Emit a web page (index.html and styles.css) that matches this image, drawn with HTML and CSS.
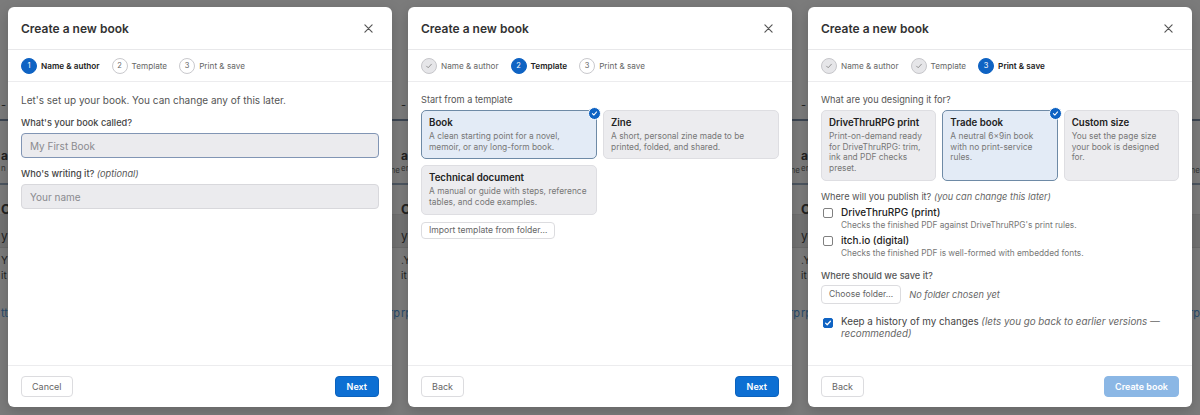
FILE: index.html
```html
<!DOCTYPE html>
<html lang="en">

<head>
	<meta charset="UTF-8">
	<title>Create a new book</title>
	<link rel="stylesheet" href="styles.css">
</head>

<body>
	<div class="shots">

		<!-- Step 1 -->
		<div class="shot">
			<div class="page">
				<div class="page-tabs"><span class="frag-l">-</span></div>
				<div class="page-item"><span class="frag-l strong">a</span><span class="frag-l small">n a</span><span class="frag-r small">ne</span></div>
				<div class="page-row"><span class="frag-l strong">Ol</span></div>
				<div class="page-field"><span class="frag-l">yi</span></div>
				<div class="page-note"><span class="frag-l">Y</span><span class="frag-l">it</span></div>
				<div class="page-link"><span class="frag-l link">tte</span><span class="frag-r link">rp</span></div>
			</div>

			<div class="modal">
				<div class="modal-header">
					<h2>Create a new book</h2>
					<button class="close" aria-label="Close">
						<svg width="9" height="9" viewBox="0 0 10 10"><path d="M1 1l8 8M9 1l-8 8" stroke="#555" stroke-width="1.3" stroke-linecap="round"/></svg>
					</button>
				</div>
				<div class="steps">
					<div class="step active"><span class="dot">1</span>Name &amp; author</div>
					<div class="step"><span class="dot">2</span>Template</div>
					<div class="step"><span class="dot">3</span>Print &amp; save</div>
				</div>
				<div class="modal-body">
					<p class="intro">Let's set up your book. You can change any of this later.</p>
					<label class="field-label">What's your book called?</label>
					<div class="input focused">My First Book</div>
					<label class="field-label">Who's writing it? <em>(optional)</em></label>
					<div class="input">Your name</div>
				</div>
				<div class="modal-footer">
					<button class="btn">Cancel</button>
					<button class="btn primary">Next</button>
				</div>
			</div>
		</div>

		<!-- Step 2 -->
		<div class="shot">
			<div class="page">
				<div class="page-tabs"><span class="frag-l">-</span></div>
				<div class="page-item"><span class="frag-l strong">a</span><span class="frag-l small">en a</span><span class="frag-r small">ne</span></div>
				<div class="page-row"><span class="frag-l strong">Ol</span></div>
				<div class="page-field"><span class="frag-l">yc</span></div>
				<div class="page-note"><span class="frag-l">.Y</span><span class="frag-l">it</span></div>
				<div class="page-link"><span class="frag-l link">rptte</span><span class="frag-r link">rp</span></div>
			</div>

			<div class="modal">
				<div class="modal-header">
					<h2>Create a new book</h2>
					<button class="close" aria-label="Close">
						<svg width="9" height="9" viewBox="0 0 10 10"><path d="M1 1l8 8M9 1l-8 8" stroke="#555" stroke-width="1.3" stroke-linecap="round"/></svg>
					</button>
				</div>
				<div class="steps">
					<div class="step done"><span class="dot"><svg width="8" height="8" viewBox="0 0 10 10"><path d="M2 5.2l2 2 4-4.4" fill="none" stroke="#888" stroke-width="1.1" stroke-linecap="round" stroke-linejoin="round"/></svg></span>Name &amp; author</div>
					<div class="step active"><span class="dot">2</span>Template</div>
					<div class="step"><span class="dot">3</span>Print &amp; save</div>
				</div>
				<div class="modal-body">
					<p class="section-label">Start from a template</p>
					<div class="cards two">
						<div class="card selected">
							<span class="tick"><svg width="7" height="7" viewBox="0 0 10 10"><path d="M2 5.2l2 2 4-4.4" fill="none" stroke="#fff" stroke-width="1.5" stroke-linecap="round" stroke-linejoin="round"/></svg></span>
							<div class="card-title">Book</div>
							<div class="card-desc">A clean starting point for a novel, memoir, or any long-form book.</div>
						</div>
						<div class="card">
							<div class="card-title">Zine</div>
							<div class="card-desc">A short, personal zine made to be printed, folded, and shared.</div>
						</div>
						<div class="card">
							<div class="card-title">Technical document</div>
							<div class="card-desc">A manual or guide with steps, reference tables, and code examples.</div>
						</div>
					</div>
					<button class="btn small import">Import template from folder…</button>
				</div>
				<div class="modal-footer">
					<button class="btn">Back</button>
					<button class="btn primary">Next</button>
				</div>
			</div>
		</div>

		<!-- Step 3 -->
		<div class="shot">
			<div class="page">
				<div class="page-tabs"><span class="frag-l">-</span></div>
				<div class="page-item"><span class="frag-l strong">a</span><span class="frag-l small">en a</span><span class="frag-r small">ne</span></div>
				<div class="page-row"><span class="frag-l strong">Ol</span></div>
				<div class="page-field"><span class="frag-l">yc</span></div>
				<div class="page-note"><span class="frag-l">.Y</span><span class="frag-l">it</span></div>
				<div class="page-link"><span class="frag-l link">rptte</span><span class="frag-r link">rp</span></div>
			</div>

			<div class="modal">
				<div class="modal-header">
					<h2>Create a new book</h2>
					<button class="close" aria-label="Close">
						<svg width="9" height="9" viewBox="0 0 10 10"><path d="M1 1l8 8M9 1l-8 8" stroke="#555" stroke-width="1.3" stroke-linecap="round"/></svg>
					</button>
				</div>
				<div class="steps">
					<div class="step done"><span class="dot"><svg width="8" height="8" viewBox="0 0 10 10"><path d="M2 5.2l2 2 4-4.4" fill="none" stroke="#888" stroke-width="1.1" stroke-linecap="round" stroke-linejoin="round"/></svg></span>Name &amp; author</div>
					<div class="step done"><span class="dot"><svg width="8" height="8" viewBox="0 0 10 10"><path d="M2 5.2l2 2 4-4.4" fill="none" stroke="#888" stroke-width="1.1" stroke-linecap="round" stroke-linejoin="round"/></svg></span>Template</div>
					<div class="step active"><span class="dot">3</span>Print &amp; save</div>
				</div>
				<div class="modal-body">
					<p class="section-label">What are you designing it for?</p>
					<div class="cards three">
						<div class="card">
							<div class="card-title">DriveThruRPG print</div>
							<div class="card-desc">Print-on-demand ready for DriveThruRPG: trim, ink and PDF checks preset.</div>
						</div>
						<div class="card selected">
							<span class="tick"><svg width="7" height="7" viewBox="0 0 10 10"><path d="M2 5.2l2 2 4-4.4" fill="none" stroke="#fff" stroke-width="1.5" stroke-linecap="round" stroke-linejoin="round"/></svg></span>
							<div class="card-title">Trade book</div>
							<div class="card-desc">A neutral 6×9in book with no print-service rules.</div>
						</div>
						<div class="card">
							<div class="card-title">Custom size</div>
							<div class="card-desc">You set the page size your book is designed for.</div>
						</div>
					</div>
					<p class="section-label publish">Where will you publish it? <em>(you can change this later)</em></p>
					<label class="check">
						<span class="box"></span>
						<span>
							<span class="check-title">DriveThruRPG (print)</span>
							<span class="check-desc">Checks the finished PDF against DriveThruRPG's print rules.</span>
						</span>
					</label>
					<label class="check">
						<span class="box"></span>
						<span>
							<span class="check-title">itch.io (digital)</span>
							<span class="check-desc">Checks the finished PDF is well-formed with embedded fonts.</span>
						</span>
					</label>
					<p class="section-label save">Where should we save it?</p>
					<div class="folder-row">
						<button class="btn small">Choose folder…</button>
						<em class="muted">No folder chosen yet</em>
					</div>
					<label class="check history">
						<span class="box checked"><svg width="8" height="8" viewBox="0 0 10 10"><path d="M2 5.2l2 2 4-4.4" fill="none" stroke="#fff" stroke-width="1.6" stroke-linecap="round" stroke-linejoin="round"/></svg></span>
						<span class="history-text">Keep a history of my changes <em>(lets you go back to earlier versions — recommended)</em></span>
					</label>
				</div>
				<div class="modal-footer">
					<button class="btn">Back</button>
					<button class="btn primary disabled">Create book</button>
				</div>
			</div>
		</div>

	</div>
</body>

</html>
```

FILE: styles.css
```css
body {
	margin: 0;
	font-family: Inter, "Liberation Sans", sans-serif;
	background-color: #7b7b7b;
	color: #333;
}

.shots {
	display: flex;
}

.shot {
	position: relative;
	width: 400px;
	height: 415px;
	overflow: hidden;
}

/* --- Dimmed page behind the dialog --- */
.page {
	display: flex;
	flex-direction: column;
	height: 100%;
	background-color: #7b7b7b;
	font-size: 11px;
	color: #222;
}

.page span {
	display: block;
}

.frag-l {
	padding-left: 1px;
}

.frag-r {
	text-align: right;
}

.page .strong {
	font-weight: 700;
	font-size: 12px;
}

.page .small {
	font-size: 8px;
	color: #333;
}

.page .link {
	color: #274a6b;
}

.page-tabs {
	height: 121px;
	box-sizing: border-box;
	padding-top: 98px;
	border-bottom: 2px solid #3d4652;
}

.page-item {
	position: relative;
	height: 64px;
	padding-top: 27px;
	box-sizing: border-box;
	border-bottom: 2px solid #4c5560;
}

.page-item .frag-r {
	position: absolute;
	right: 0;
	top: 44px;
}

.page-row {
	height: 30px;
	box-sizing: border-box;
	padding-top: 16px;
	border-bottom: 1px solid #6e6e6e;
}

.page-row .strong {
	font-size: 13px;
}

.page-field {
	height: 33px;
	box-sizing: border-box;
	padding-top: 13px;
	background-color: #727272;
	border-bottom: 1px solid #6a6a6a;
	font-size: 12px;
}

.page-note {
	height: 58px;
	box-sizing: border-box;
	padding-top: 5px;
	font-size: 10px;
	line-height: 15px;
}

.page-link {
	position: relative;
	font-size: 11px;
}

.page-link .frag-r {
	position: absolute;
	right: 0;
	top: 0;
}

/* --- Dialog --- */
.modal {
	position: absolute;
	top: 7px;
	left: 8px;
	width: 384px;
	height: 400px;
	display: flex;
	flex-direction: column;
	background: #fff;
	border-radius: 6px;
	box-shadow: 0 4px 14px rgba(0, 0, 0, 0.18);
}

.modal-header {
	display: flex;
	align-items: center;
	justify-content: space-between;
	height: 42px;
	padding: 0 13px;
	border-bottom: 1px solid #e8e8ea;
	flex-shrink: 0;
}

.modal-header h2 {
	margin: 0;
	font-size: 12px;
	font-weight: 600;
	color: #333;
}

.close {
	border: none;
	background: none;
	padding: 0;
	margin-right: 6px;
	display: flex;
	cursor: pointer;
}

.steps {
	display: flex;
	align-items: center;
	gap: 12px;
	height: 31px;
	padding: 0 13px;
	border-bottom: 1px solid #ececee;
	flex-shrink: 0;
}

.step {
	display: flex;
	align-items: center;
	gap: 4px;
	font-size: 8.2px;
	color: #666;
}

.step .dot {
	display: flex;
	align-items: center;
	justify-content: center;
	width: 14px;
	height: 14px;
	border-radius: 50%;
	border: 1px solid #c9c9cd;
	font-size: 7.5px;
	font-weight: 400;
	color: #666;
}

.step.active {
	color: #222;
	font-weight: 600;
}

.step.active .dot {
	background-color: #0f63c3;
	border-color: #0f63c3;
	color: #fff;
}

.step.done .dot {
	background-color: #e6e6e9;
	border-color: #c6c6ca;
}

.modal-body {
	flex: 1;
	padding: 12px 13px 0;
}

.intro {
	margin: 0 0 11px;
	font-size: 10px;
	line-height: 12px;
	color: #555;
}

.section-label {
	margin: 0 0 4px;
	font-size: 9.2px;
	line-height: 12px;
	color: #555;
}

.section-label em {
	color: #666;
}

.field-label {
	display: block;
	margin: 0 0 4px;
	font-size: 9.2px;
	line-height: 12px;
	font-weight: 500;
	color: #444;
}

.field-label em {
	font-weight: 400;
	color: #555;
}

.input {
	height: 25px;
	box-sizing: border-box;
	display: flex;
	align-items: center;
	padding: 0 8px;
	margin-bottom: 10px;
	background-color: #ebebee;
	border: 1px solid #d8d8dc;
	border-radius: 4px;
	font-size: 10px;
	color: #8a8a8e;
}

.input.focused {
	border-color: #8195b4;
}

/* --- Cards --- */
.cards {
	display: grid;
	gap: 6px;
}

.cards.two {
	grid-template-columns: 1fr 1fr;
}

.cards.three {
	grid-template-columns: 1fr 1fr 1fr;
}

.card {
	position: relative;
	padding: 6px 7px 6px;
	background-color: #ececef;
	border: 1px solid #dedee2;
	border-radius: 5px;
}

.card.selected {
	background-color: #e3ebf6;
	border-color: #6e8aa6;
}

.card-title {
	font-size: 9.7px;
	line-height: 12px;
	font-weight: 600;
	color: #222;
	margin-bottom: 2px;
}

.card-desc {
	font-size: 8.4px;
	line-height: 10.7px;
	color: #777;
}

.tick {
	position: absolute;
	top: -4px;
	right: -5px;
	width: 11px;
	height: 11px;
	border-radius: 50%;
	background-color: #0f63c3;
	border: 1px solid #fff;
	display: flex;
	align-items: center;
	justify-content: center;
}

/* --- Buttons --- */
.btn {
	font-family: inherit;
	font-size: 9px;
	color: #666;
	background: #fff;
	border: 1px solid #dcdcdf;
	border-radius: 4px;
	height: 21px;
	padding: 0 10px;
	cursor: pointer;
}

.btn.primary {
	background-color: #0d6fd3;
	border-color: #0b62bd;
	color: #fff;
	font-weight: 600;
	padding: 0 11px;
}

.btn.primary.disabled {
	background-color: #8bb7e5;
	border-color: #8bb7e5;
	padding: 0 10px;
}

.btn.small {
	height: 17px;
	font-size: 8.6px;
	padding: 0 7px;
}

.import {
	margin-top: 7px;
}

.modal-footer {
	display: flex;
	align-items: center;
	justify-content: space-between;
	height: 41px;
	padding: 0 13px;
	border-top: 1px solid #ececee;
	flex-shrink: 0;
}

/* --- Step 3 extras --- */
.publish {
	margin-top: 10px;
	margin-bottom: 3px;
}

.check {
	display: flex;
	align-items: flex-start;
	gap: 8px;
	margin: 0 0 3px 2px;
}

.box {
	flex-shrink: 0;
	width: 8px;
	height: 8px;
	margin-top: 2px;
	border: 1px solid #808080;
	border-radius: 2px;
	background: #fff;
	display: flex;
	align-items: center;
	justify-content: center;
}

.box.checked {
	background-color: #0f63c3;
	border-color: #0f63c3;
}

.check-title {
	display: block;
	font-size: 10px;
	line-height: 13px;
	font-weight: 500;
	color: #222;
}

.check-desc {
	display: block;
	font-size: 8.3px;
	line-height: 12px;
	color: #777;
}

.save {
	margin-top: 11px;
	margin-bottom: 3px;
	font-weight: 500;
}

.folder-row {
	display: flex;
	align-items: center;
	gap: 8px;
}

.folder-row .btn.small {
	height: 19px;
}

.muted {
	font-size: 9.2px;
	color: #666;
}

.history {
	margin-top: 12px;
}

.history-text {
	font-size: 9.8px;
	line-height: 12px;
	color: #444;
}

.history-text em {
	color: #666;
}
```
